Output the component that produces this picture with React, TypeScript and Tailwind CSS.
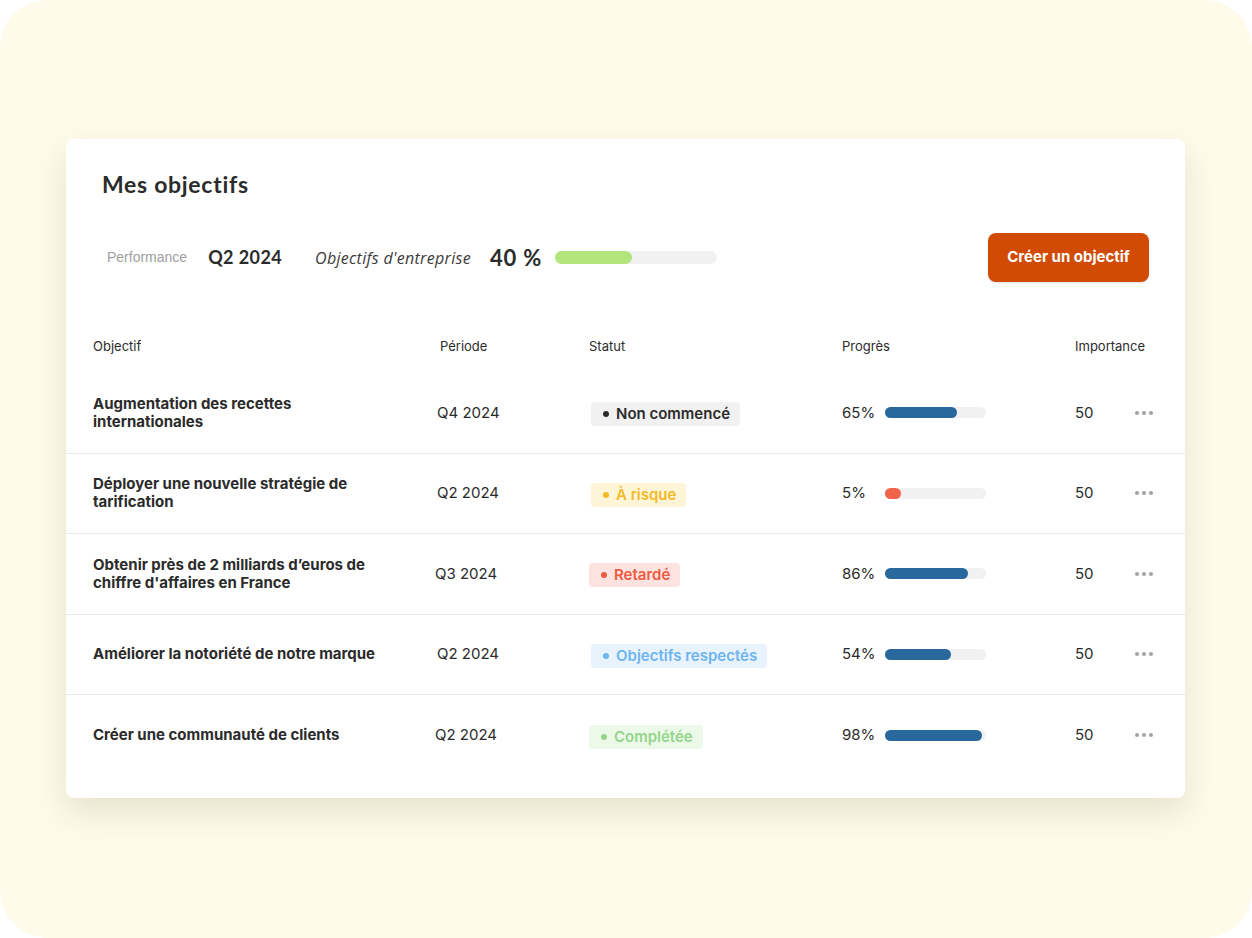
import React from "react";

type Status = "idle" | "risk" | "late" | "ok" | "done";

const statusStyles: Record<Status, { label: string; box: string; dot: string }> = {
  idle: { label: "Non commencé", box: "bg-[#f1f1f1] text-[#2b2b2b]", dot: "bg-[#2b2b2b]" },
  risk: { label: "À risque", box: "bg-[#fdf5d6] text-[#f2b928]", dot: "bg-[#f2b928]" },
  late: { label: "Retardé", box: "bg-[#fde3df] text-[#ee5a42]", dot: "bg-[#ee5a42]" },
  ok: { label: "Objectifs respectés", box: "bg-[#e9f3fd] text-[#6db5ef]", dot: "bg-[#6db5ef]" },
  done: { label: "Complétée", box: "bg-[#ecf9e9] text-[#93d58a]", dot: "bg-[#93d58a]" },
};

const rows: { title: React.ReactNode; period: string; status: Status; shift: string; progress: number; fill: number; color: string }[] = [
  { title: <>Augmentation des recettes<br />internationales</>, period: "Q4 2024", status: "idle", shift: "", progress: 65, fill: 72, color: "bg-[#29689c]" },
  { title: <>Déployer une nouvelle stratégie de<br />tarification</>, period: "Q2 2024", status: "risk", shift: "", progress: 5, fill: 16, color: "bg-[#f2634b]" },
  { title: <>Obtenir près de 2 milliards d’euros de<br />chiffre d'affaires en France</>, period: "Q3 2024", status: "late", shift: "-ml-[2px]", progress: 86, fill: 83, color: "bg-[#29689c]" },
  { title: <>Améliorer la notoriété de notre marque</>, period: "Q2 2024", status: "ok", shift: "", progress: 54, fill: 66, color: "bg-[#29689c]" },
  { title: <>Créer une communauté de clients</>, period: "Q2 2024", status: "done", shift: "-ml-[2px]", progress: 98, fill: 97, color: "bg-[#29689c]" },
];

const cols = "grid grid-cols-[344px_154px_251px_233px_60px_auto] items-center pl-[27px]";

export default function App() {
  return (
    <div className="w-full h-[938px] bg-white" style={{ fontFamily: "Inter, 'Liberation Sans', sans-serif" }}>
      <div className="h-full rounded-[48px] bg-[#fefbea] pt-[139px] pl-[66px]">
        {/* Card */}
        <div className="w-[1119px] h-[659px] rounded-lg bg-white shadow-[0_14px_32px_rgba(60,50,10,0.12)]">
          <div className="pt-[31px] pl-9 pr-9">
            <h1 className="text-[23px] leading-7 font-bold tracking-[0.7px] text-[#2b2b2b]" style={{ fontFamily: "Lato, sans-serif" }}>
              Mes objectifs
            </h1>

            <div className="mt-[35px] flex items-center h-[49px]">
              <span className="ml-[5px] text-[14px] text-[#a0a0a0]" style={{ fontFamily: "'Liberation Sans', sans-serif" }}>Performance</span>
              <span className="ml-[21px] text-[18px] font-bold tracking-[0.4px] text-[#2b2b2b]" style={{ fontFamily: "Lato, sans-serif" }}>Q2 2024</span>
              <span className="ml-[33px] text-[16px] italic tracking-[0.3px] text-[#3a3a3a]" style={{ fontFamily: "'Open Sans', sans-serif" }}>Objectifs d'entreprise</span>
              <span className="ml-[19px] text-[22px] font-bold tracking-[0.8px] text-[#2b2b2b]" style={{ fontFamily: "Lato, sans-serif" }}>40 %</span>
              <div className="ml-[13px] w-[162px] h-[13px] rounded-full bg-[#f1f1f1]">
                <div className="h-full w-[77px] rounded-full bg-[#b3e57d]" />
              </div>
              <button className="ml-auto w-[161px] h-[49px] rounded-lg bg-[#d14b05] text-white text-[15px] font-bold shadow-sm">
                Créer un objectif
              </button>
            </div>
          </div>

          {/* Table header */}
          <div className={`${cols} mt-[55px] text-[13px] text-[#2b2b2b] h-4`}>
            <span>Objectif</span>
            <span className="ml-[3px]">Période</span>
            <span className="-ml-[2px]">Statut</span>
            <span>Progrès</span>
            <span>Importance</span>
            <span />
          </div>

          <div className="mt-[20px]">
            {rows.map((r, i) => {
              const s = statusStyles[r.status];
              return (
                <div
                  key={i}
                  className={`${cols} h-[80.5px] ${i < rows.length - 1 ? "border-b border-[#e9e9e9]" : ""}`}
                >
                  <div className="text-[15px] leading-[18px] font-bold text-[#2b2b2b] whitespace-nowrap">{r.title}</div>
                  <div className={`text-[15px] text-[#2b2b2b] ${r.shift}`}>{r.period}</div>
                  <div className={r.shift}>
                    <span className={`inline-flex items-center h-6 pl-3 pr-[10px] rounded text-[15px] font-semibold ${s.box}`}>
                      <span className={`w-[6px] h-[6px] rounded-full ${s.dot}`} />
                      <span className="ml-[7px]">{s.label}</span>
                    </span>
                  </div>
                  <div className="flex items-center">
                    <span className="w-[43px] text-[15px] text-[#2b2b2b]">{r.progress}%</span>
                    <div className="w-[101px] h-[11px] rounded-full bg-[#f1f1f1]">
                      <div className={`h-full rounded-full ${r.color}`} style={{ width: `${r.fill}px` }} />
                    </div>
                  </div>
                  <div className="text-[15px] text-[#2b2b2b]">50</div>
                  <div className="flex items-center gap-[3px]">
                    <span className="w-[4px] h-[4px] rounded-full bg-[#a3a3a3]" />
                    <span className="w-[4px] h-[4px] rounded-full bg-[#a3a3a3]" />
                    <span className="w-[4px] h-[4px] rounded-full bg-[#a3a3a3]" />
                  </div>
                </div>
              );
            })}
          </div>
        </div>
      </div>
    </div>
  );
}
